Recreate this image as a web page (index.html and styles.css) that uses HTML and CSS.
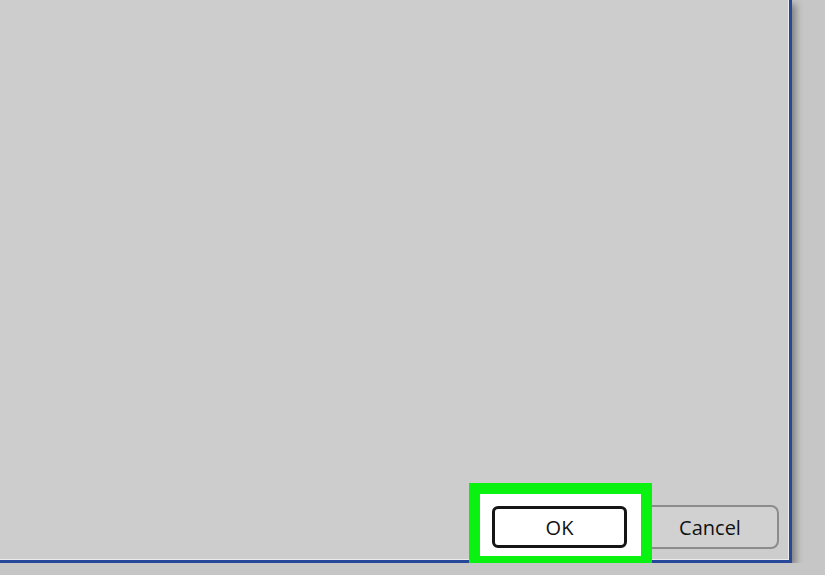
FILE: index.html
```html
<!DOCTYPE html>
<html lang="en">
<head>
    <meta charset="UTF-8">
    <title>Dialog</title>
    <link rel="stylesheet" href="styles.css">
</head>
<body>
    <div class="window">
        <div class="content"></div>
        <div class="footer">
            <div class="ok-wrap">
                <span class="frame"></span>
                <button class="btn ok">OK</button>
            </div>
            <button class="btn cancel">Cancel</button>
        </div>
    </div>
</body>
</html>
```

FILE: styles.css
```css
body {
    margin: 0;
    background-color: #c6c6c6;
    font-family: "Open Sans", "Noto Sans", sans-serif;
    overflow: hidden;
}
.window {
    width: 789px;
    height: 560px;
    display: flex;
    flex-direction: column;
    background-color: #cdcdcd;
    border-right: 3px solid #27479a;
    border-bottom: 3px solid #27479a;
    box-shadow: inset -1px -1px 0 #ececec, 4px 4px 7px rgba(0, 0, 0, 0.35);
}
.content {
    flex: 1;
}
.footer {
    display: flex;
    justify-content: flex-end;
    align-items: center;
    gap: 14px;
    padding: 0 10px 11px 0;
}
.ok-wrap {
    position: relative;
    display: flex;
}
.frame {
    position: absolute;
    left: -23px;
    top: -23px;
    width: 161px;
    height: 62px;
    border: 11px solid #0af20f;
    background-color: #fff;
    z-index: 1;
}
.btn {
    font-family: inherit;
    font-size: 20px;
    color: #111;
    padding: 0;
    cursor: pointer;
}
.ok {
    position: relative;
    z-index: 2;
    width: 135px;
    height: 42px;
    background-color: #fff;
    border: 3px solid #151515;
    border-radius: 6px;
}
.cancel {
    width: 138px;
    height: 44px;
    background-color: #d1d1d1;
    border: 2px solid #8c8c8c;
    border-radius: 8px;
}
```
